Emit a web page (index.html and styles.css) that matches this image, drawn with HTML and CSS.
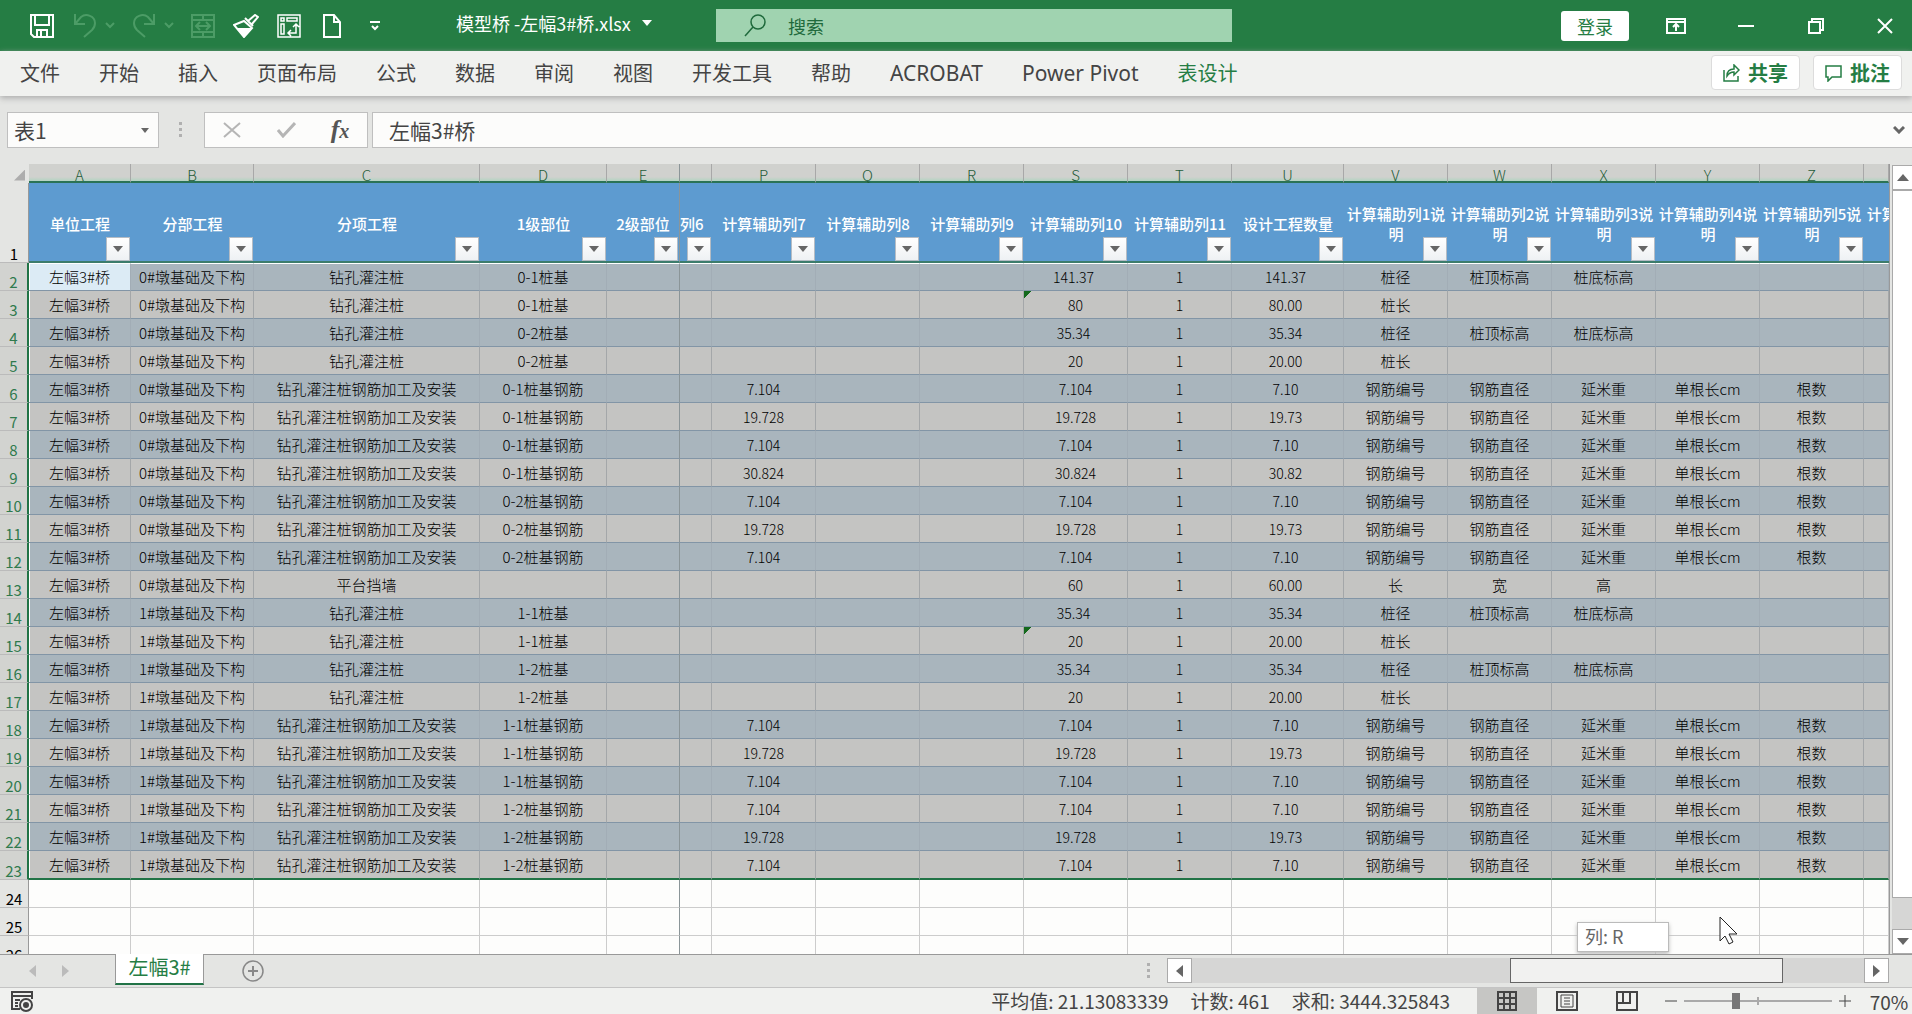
FILE: index.html
```html
<!DOCTYPE html>
<html lang="zh-CN">
<head>
<meta charset="utf-8">
<title>模型桥 -左幅3#桥.xlsx</title>
<link rel="stylesheet" href="styles.css">
</head>
<body>
<header class="titlebar">
  <div class="quick">
    <button class="q-btn" aria-label="保存"><svg width="24" height="24" viewBox="0 0 24 24"><path d="M1 1h22v22H4l-3-3zM5 1v10h14V1M7 23v-7h10v7M11 17v5"/></svg></button>
    <button class="q-btn dim" aria-label="撤消"><svg width="24" height="24" viewBox="0 0 24 24"><path d="M2 0v10h10M2 10L8 3c5-4 14-1 14 6 0 3-1 5-3 7l-8 7"/></svg></button>
    <button class="q-caret dim" aria-label="撤消列表"><svg width="10" height="7" viewBox="0 0 10 7"><path d="M1 1l4 4 4-4"/></svg></button>
    <button class="q-btn dim" aria-label="恢复"><svg width="24" height="24" viewBox="0 0 24 24"><path d="M22 0v10H12M22 10l-6-7C11-1 2 2 2 9c0 3 1 5 3 7l8 7"/></svg></button>
    <button class="q-caret dim" aria-label="恢复列表"><svg width="10" height="7" viewBox="0 0 10 7"><path d="M1 1l4 4 4-4"/></svg></button>
    <button class="q-btn dim" aria-label="合并后居中"><svg width="24" height="24" viewBox="0 0 24 24"><path d="M1 1h22v22H1zM1 6h22M1 18h22M12 1v5M12 18v5M5 12h14M9 8l-4 4 4 4M15 8l4 4-4 4"/></svg></button>
    <button class="q-btn" aria-label="格式刷"><svg width="26" height="24" viewBox="0 0 26 24"><path d="M1 11l10-4 8 7-8 9zM12 4l8 8M15 7l7-6 3 2-6 7"/><path class="solid" d="M6 15h11l-6 7z"/></svg></button>
    <button class="q-btn" aria-label="数据透视表"><svg class="fine" width="24" height="24" viewBox="0 0 24 24"><path d="M1 1h22v22H1zM4 4h3v3H4zM10 4h10v3H10zM4 10h3v10H4zM19 10v9h-8M16 13l3-3 3 3M14 16l-3 3 3 3"/></svg></button>
    <button class="q-btn" aria-label="新建"><svg width="20" height="24" viewBox="0 0 20 24"><path d="M2 1h10l6 7v15H2zM12 1v7h6"/></svg></button>
    <button class="q-more" aria-label="自定义快速访问工具栏"><svg width="12" height="10" viewBox="0 0 12 10"><path d="M1 1h10M3 5l3 3 3-3"/></svg></button>
  </div>
  <button class="doc-name">模型桥 -左幅3#桥.xlsx<span class="tri white"></span></button>
  <label class="search">
    <svg width="22" height="24" viewBox="0 0 22 24"><circle cx="14" cy="8" r="7"/><path d="M9 13L1 22"/></svg>
    <input type="search" placeholder="搜索" aria-label="搜索">
  </label>
  <div class="win">
    <button class="login">登录</button>
    <button class="w-btn" aria-label="功能区显示选项"><svg width="20" height="16" viewBox="0 0 20 16"><path d="M1 1h18v14H1zM1 4h18M10 13V7M7 9l3-3 3 3"/></svg></button>
    <button class="w-btn" aria-label="最小化"><svg width="16" height="16" viewBox="0 0 16 16"><path d="M0 8h16"/></svg></button>
    <button class="w-btn" aria-label="还原"><svg width="16" height="16" viewBox="0 0 16 16"><path d="M1 4h11v11H1zM4 4V1h11v11h-3"/></svg></button>
    <button class="w-btn" aria-label="关闭"><svg width="16" height="16" viewBox="0 0 16 16"><path d="M1 1l14 14M15 1L1 15"/></svg></button>
  </div>
</header>

<nav class="ribbon">
  <button>文件</button><button>开始</button><button>插入</button><button>页面布局</button><button>公式</button><button>数据</button><button>审阅</button><button>视图</button><button>开发工具</button><button>帮助</button><button class="latin">ACROBAT</button><button class="latin">Power Pivot</button><button class="on">表设计</button>
  <div class="ribbon-end">
    <button class="pill"><svg width="17" height="18" viewBox="0 0 17 18"><path d="M1 6v11h14v-5M4 12c0-5 3-7 7-7V1l5 5-5 5V8c-3 0-5 1-7 4z"/></svg>共享</button>
    <button class="pill"><svg width="17" height="18" viewBox="0 0 17 18"><path d="M1 2h15v11H7l-4 4v-4H1z"/></svg>批注</button>
  </div>
</nav>

<section class="formula">
  <div class="name-box"><input type="text" value="表1" aria-label="名称框"><button aria-label="名称列表"><span class="tri"></span></button></div>
  <span class="dots"></span>
  <div class="fx-box">
    <button aria-label="取消"><svg width="18" height="16" viewBox="0 0 18 16"><path d="M1 1l16 14M17 1L1 15"/></svg></button>
    <button aria-label="输入"><svg width="19" height="16" viewBox="0 0 19 16"><path class="thick" d="M1 8l5 6L18 1"/></svg></button>
    <button class="fx" aria-label="插入函数">f<small>x</small></button>
  </div>
  <div class="entry"><input type="text" value="左幅3#桥" aria-label="编辑栏"><button aria-label="展开编辑栏"><svg width="12" height="8" viewBox="0 0 12 8"><path d="M1 1l5 5 5-5"/></svg></button></div>
</section>

<main class="work">
  <div class="grid-view">
    <table class="grid" id="grid"></table>
    <div class="tip">列: R</div>
    <svg class="cursor" width="20" height="29" viewBox="0 0 20 29"><path d="M1 1v24l5-5 4 8 4-2-4-8h8z"/></svg>
  </div>
  <div class="vscroll">
    <button aria-label="向上"><span class="tri up"></span></button>
    <div class="v-thumb"></div>
    <div class="v-track"></div>
    <button aria-label="向下"><span class="tri down"></span></button>
  </div>
</main>

<div class="sheets">
  <button class="nav-arrow" aria-label="上一工作表"><span class="tri left pale"></span></button>
  <button class="nav-arrow" aria-label="下一工作表"><span class="tri right pale"></span></button>
  <button class="sheet-tab">左幅3#</button>
  <button class="add" aria-label="新工作表"><svg width="24" height="24" viewBox="0 0 24 24"><circle cx="12" cy="12" r="10"/><path class="thick" d="M7 12h10M12 7v10"/></svg></button>
  <div class="h-area">
    <span class="dots"></span>
    <div class="hscroll">
      <button aria-label="向左"><span class="tri left"></span></button>
      <div class="h-track"><div class="h-thumb"></div></div>
      <button aria-label="向右"><span class="tri right"></span></button>
    </div>
  </div>
</div>

<footer class="status">
  <button class="macro" aria-label="录制宏"><svg width="23" height="21" viewBox="0 0 23 21"><path d="M9 18H1V1h20v7M1 5h20M4 9h5M4 12h3M4 15h3"/><circle cx="15" cy="14" r="6"/><circle class="solid" cx="15" cy="14" r="2"/></svg></button>
  <div class="stats"><span>平均值: 21.13083339</span><span>计数: 461</span><span>求和: 3444.325843</span></div>
  <div class="views">
    <button class="on" aria-label="普通"><svg width="20" height="20" viewBox="0 0 20 20"><path d="M1 1h18v18H1zM1 7h18M1 13h18M7 1v18M13 1v18"/></svg></button>
    <button aria-label="页面布局"><svg width="22" height="20" viewBox="0 0 22 20"><path d="M1 1h20v18H1z"/><path class="hair" d="M5 4h12v12H5zM8 7h6M8 10h6M8 13h6"/></svg></button>
    <button aria-label="分页预览"><svg width="22" height="20" viewBox="0 0 22 20"><path d="M1 1h20v18H1zM7 1v11M1 12h13V1"/></svg></button>
  </div>
  <div class="zoom">
    <button aria-label="缩小"><svg width="12" height="12" viewBox="0 0 12 12"><path d="M0 6h12"/></svg></button>
    <input type="range" min="0" max="100" value="34" aria-label="显示比例">
    <button aria-label="放大"><svg width="12" height="12" viewBox="0 0 12 12"><path d="M0 6h12M6 0v12"/></svg></button>
    <button class="pct">70%</button>
  </div>
</footer>
<script src="grid.js"></script>
</body>
</html>
```
FILE: styles.css
```css
* { box-sizing: border-box; }
body {
  margin: 0;
  height: 100vh;
  display: flex;
  flex-direction: column;
  overflow: hidden;
  background: #e4e5e3;
  color: #444;
  font-family: "Noto Sans CJK SC", "Noto Sans", sans-serif;
  font-size: 20px;
}
button, input { font: inherit; color: inherit; border: 0; padding: 0; margin: 0; background: none; outline: 0; }
button { display: flex; align-items: center; justify-content: center; flex: none; white-space: nowrap; }
svg { display: block; fill: none; stroke: currentColor; stroke-width: 2; flex: none; }
svg .solid { fill: currentColor; }
svg .thick { stroke-width: 3; }
svg .hair { stroke-width: 1; }

.tri { width: 0; height: 0; border: 5px solid transparent; border-top: 6px solid #666; border-bottom: 0; }
.tri.white { border-top-color: #fff; }
.tri.up { border: 6px solid transparent; border-bottom: 7px solid #666; border-top: 0; }
.tri.down { border-width: 7px 6px 0; }
.tri.left { border: 6px solid transparent; border-right: 7px solid #666; border-left: 0; }
.tri.right { border: 6px solid transparent; border-left: 7px solid #666; border-right: 0; }
.tri.left.pale { border-right-color: #bbb; }
.tri.right.pale { border-left-color: #bbb; }
.dots {
  width: 3px;
  height: 16px;
  background: repeating-linear-gradient(#b0b0b0 0 3px, transparent 3px 6px);
}

/* Title bar */
.titlebar { flex: none; height: 51px; background: #257d44; color: #fff; display: flex; align-items: center; position: relative; }
.quick { display: flex; align-items: center; width: 456px; padding-left: 28px; flex: none; }
.quick .dim { color: #4c9c66; }
.q-btn { width: 28px; margin-right: 15px; }
.q-btn .fine { stroke-width: 1.5; }
.q-caret { width: 12px; margin-left: -10px; margin-right: 14px; }
.q-more { width: 28px; }
.doc-name { font-size: 18px; gap: 11px; padding-bottom: 5px; }
.search {
  position: absolute;
  left: 716px;
  top: 9px;
  width: 27%;
  height: 33px;
  background: #a0d3b0;
  color: #1f6a3c;
  display: flex;
  align-items: center;
  padding-left: 28px;
  gap: 22px;
}
.search svg { stroke-width: 1.5; }
.search input { flex: 1; min-width: 0; font-size: 18px; }
.search input::placeholder { color: #1f6a3c; opacity: 1; }
.win { margin-left: auto; display: flex; align-items: center; }
.login { width: 68px; height: 30px; background: #fff; color: #257d44; border-radius: 3px; font-size: 18px; margin-right: 12px; }
.w-btn { width: 70px; height: 50px; }
.w-btn:last-child { width: 61px; padding-left: 7px; }

/* Ribbon tabs */
.ribbon { flex: none; height: 45px; background: #f0f1ef; display: flex; align-items: center; gap: 39px; padding: 0 10px 2px 20px; box-shadow: 0 2px 6px #aaa; position: relative; font-family: "Noto Sans", "Noto Sans CJK SC", sans-serif; }
.ribbon > .on { color: #257d44; }
.ribbon > .latin { font-size: 21px; }
.ribbon-end { margin-left: auto; display: flex; gap: 13px; }
.pill { width: 89px; height: 35px; background: #fff; border: 1px solid #dcdcdc; border-radius: 4px; color: #257d44; font-weight: bold; gap: 8px; }
.pill svg { stroke-width: 1.5; }

/* Formula bar */
.formula { flex: none; height: 68px; padding: 16px 0 16px 7px; display: flex; align-items: center; font-size: 21px; }
.name-box, .fx-box, .entry { height: 36px; background: #fcfcfb; border: 1px solid #bfbfbf; display: flex; align-items: center; flex: none; }
.name-box { width: 152px; padding: 0 9px 0 6px; }
.name-box input, .entry input { flex: 1; min-width: 0; }
.name-box .tri { border-width: 5px 4px 0; }
.formula .dots { margin: 0 22px 0 20px; }
.fx-box { width: 164px; margin-right: 4px; justify-content: center; gap: 14px; color: #b5b5b5; }
.fx-box button { width: 40px; }
.fx-box .fx { color: #555; font: italic bold 26px "Liberation Serif", serif; align-items: baseline; }
.fx small { font-size: 20px; }
.entry { flex: 1; border-right: 0; padding: 0 7px 0 16px; }
.entry svg { stroke: #666; stroke-width: 3; }

/* Worksheet */
.work { flex: 1; min-height: 0; display: flex; }
.grid-view { flex: 1; min-width: 0; overflow: hidden; position: relative; border-right: 1px solid #999; }
.grid { table-layout: fixed; width: 100%; border-collapse: separate; border-spacing: 0; background: #fdfdfc; font-size: 15px; line-height: 20px; color: #000; }
.grid th, .grid td { padding: 0; border: 0 solid; text-align: center; vertical-align: middle; white-space: nowrap; font-weight: normal; }
.grid td { font-weight: 300; }
.c-head { width: 29px; }
.c-a { width: 102px; }
.c-b { width: 123px; }
.c-c { width: 226px; }
.c-d { width: 127px; }
.c-e { width: 73px; }
.c-o { width: 32px; }
.c-m { width: 104px; }
.c-u { width: 112px; }

.grid .letters th { height: 19px; padding-top: 5px; line-height: 12px; font-weight: 300; background: linear-gradient(#d0d1ce 13px, #b9d3c4 16px); border-right: 1px solid #a8a8a8; border-bottom: 2px solid #2b7355; color: #1f5b38; }
.grid .letters .corner { background: #e4e5e3; border-color: #e4e5e3; }
.corner span { display: block; width: 11px; height: 11px; margin-left: 14px; background: #adadad; clip-path: polygon(100% 0, 100% 100%, 0 100%); }

.grid .num { background: #e4e5e3; border-right: 1px solid #999; border-bottom: 1px solid #bbb; vertical-align: bottom; line-height: 16px; font-size: 15px; }
.titles th { height: 80px; }
.grid .titles .cap { position: relative; overflow: hidden; padding-top: 3px; background: #5d9bd0; color: #fff; border-bottom: 2px solid #3c7c6c; font-weight: 500; white-space: normal; }
.cap div { width: 104px; }
.grid .titles .partial { text-align: left; }
.filter { position: absolute; right: 1px; bottom: 0; width: 24px; height: 24px; background: linear-gradient(#fff, #eef1f4); border: 1px solid #b5bcc4; }

.row td, .row .num { height: 28px; }
.row.sel .num { background: #d2d3d0; border-right: 2px solid #217346; color: #2f7a4d; }
.row.sel td { background: #c4c4c2; border-right: 1px solid #a4a7a9; border-bottom: 1px solid #8295a6; }
.row.band td { background: #a9b5bd; border-right-color: #a2adb6; }
.row.sel td:nth-child(2) { box-shadow: inset 1px 0 #fff; }
.row.sel.first td { border-top: 1px solid #fff; }
.row.first td.active { background: #dcebf5; }
.row.last td { height: 29px; border-bottom: 2px solid #217346; }
.row.blank td { border-right: 1px solid #ccc; border-bottom: 1px solid #ccc; }
.grid .figure { font-size: 14px; }
.grid .decimal { padding-right: 4px; }
.row.sel td.flag { background-image: linear-gradient(135deg, #14691c 5px, transparent 5px); }
.letters th.freeze, .row td.freeze, .row.sel td.freeze, .grid .titles .freeze { border-right: 1px solid #8b9598; }

.tip { position: absolute; right: 220px; bottom: 2px; width: 92px; height: 30px; background: #fff; border: 1px solid #bbb; box-shadow: 0 2px 4px #bbb; font-size: 18px; line-height: 26px; padding-left: 7px; color: #666; }
.cursor { position: absolute; right: 150px; bottom: 9px; fill: #fff; stroke: #222; stroke-width: 1; }

.vscroll { flex: none; width: 22px; padding-top: 1px; border-left: 2px solid #e4e5e3; display: flex; flex-direction: column; }
.vscroll button { height: 25px; background: #fff; border: 1px solid #aaa; border-right: 0; }
.v-thumb { flex: 1; background: #fff; border: 1px solid #aaa; border-right: 0; }
.v-track { height: 31px; background: #d6d6d5; }

/* Sheet tabs */
.sheets { flex: none; height: 33px; border-top: 1px solid #999; display: flex; align-items: center; padding: 0 23px 1px 16px; }
.nav-arrow { width: 33px; }
.sheet-tab { width: 89px; height: 31px; margin: -1px 37px 0 33px; padding-bottom: 4px; line-height: 25px; background: #fff; border: 1px solid #999; border-top: 0; border-bottom: 2px solid #217346; color: #257d44; align-self: flex-start; }
.add { color: #888; }
.add svg { stroke-width: 1.5; }
.add .thick { stroke-width: 2; }
.h-area { margin-left: auto; width: 40%; display: flex; align-items: center; justify-content: flex-end; gap: 17px; }
.hscroll { width: 722px; display: flex; height: 25px; }
.hscroll button { width: 25px; background: #fff; border: 1px solid #aaa; }
.h-track { flex: 1; background: #d6d6d5; padding: 0 81px; display: flex; justify-content: flex-end; }
.h-thumb { width: 273px; background: #f1f1f0; border: 1px solid #666; }

/* Status bar */
.status { flex: none; height: 27px; background: #f0f1ef; border-top: 1px solid #c4c4c4; display: flex; align-items: center; padding: 0 4px 0 11px; overflow: hidden; font-size: 19px; }
.stats { margin-left: auto; display: flex; gap: 22px; white-space: nowrap; line-height: 26px; }
.views { display: flex; margin-left: 27px; color: #444; }
.views button { width: 60px; height: 26px; }
.views .on { background: #c6c6c4; }
.zoom { display: flex; align-items: center; margin-left: 8px; }
.zoom button { width: 12px; }
.zoom svg { stroke-width: 1; }
.zoom input {
  appearance: none;
  width: 148px;
  height: 16px;
  margin: 0 7px;
  background:
    linear-gradient(#aaa, #aaa) center / 2px 8px no-repeat,
    linear-gradient(#aaa, #aaa) center / 100% 2px no-repeat;
}
.zoom input::-webkit-slider-thumb { appearance: none; width: 8px; height: 16px; background: #777; }
.zoom .pct { width: 38px; margin-left: 19px; }
```
FILE: grid.js
```js
const columns = [
  ['A', 'c-a', '单位工程'], ['B', 'c-b', '分部工程'], ['C', 'c-c', '分项工程'],
  ['D', 'c-d', '1级部位'], ['E', 'c-e', '2级部位'], ['', 'c-o', '列6'],
  ['P', 'c-m', '计算辅助列7'], ['Q', 'c-m', '计算辅助列8'], ['R', 'c-m', '计算辅助列9'],
  ['S', 'c-m', '计算辅助列10'], ['T', 'c-m', '计算辅助列11'], ['U', 'c-u', '设计工程数量'],
  ['V', 'c-m', '计算辅助列1说明'], ['W', 'c-m', '计算辅助列2说明'], ['X', 'c-m', '计算辅助列3说明'],
  ['Y', 'c-m', '计算辅助列4说明'], ['Z', 'c-m', '计算辅助列5说明'], ['', '', '计算辅助列6说明']
];

const pile = '钻孔灌注桩';
const rebar = '钻孔灌注桩钢筋加工及安装';
const size = ['桩径', '桩顶标高', '桩底标高'];
const length = ['桩长'];
const steel = ['钢筋编号', '钢筋直径', '延米重', '单根长cm', '根数'];

// pier, item, part, P, S, U, notes
const rows = [
  [0, pile, '0-1桩基', '', '141.37', '141.37', size],
  [0, pile, '0-1桩基', '', '80', '80.00', length],
  [0, pile, '0-2桩基', '', '35.34', '35.34', size],
  [0, pile, '0-2桩基', '', '20', '20.00', length],
  [0, rebar, '0-1桩基钢筋', '7.104', '7.104', '7.10', steel],
  [0, rebar, '0-1桩基钢筋', '19.728', '19.728', '19.73', steel],
  [0, rebar, '0-1桩基钢筋', '7.104', '7.104', '7.10', steel],
  [0, rebar, '0-1桩基钢筋', '30.824', '30.824', '30.82', steel],
  [0, rebar, '0-2桩基钢筋', '7.104', '7.104', '7.10', steel],
  [0, rebar, '0-2桩基钢筋', '19.728', '19.728', '19.73', steel],
  [0, rebar, '0-2桩基钢筋', '7.104', '7.104', '7.10', steel],
  [0, '平台挡墙', '', '', '60', '60.00', ['长', '宽', '高']],
  [1, pile, '1-1桩基', '', '35.34', '35.34', size],
  [1, pile, '1-1桩基', '', '20', '20.00', length],
  [1, pile, '1-2桩基', '', '35.34', '35.34', size],
  [1, pile, '1-2桩基', '', '20', '20.00', length],
  [1, rebar, '1-1桩基钢筋', '7.104', '7.104', '7.10', steel],
  [1, rebar, '1-1桩基钢筋', '19.728', '19.728', '19.73', steel],
  [1, rebar, '1-1桩基钢筋', '7.104', '7.104', '7.10', steel],
  [1, rebar, '1-2桩基钢筋', '7.104', '7.104', '7.10', steel],
  [1, rebar, '1-2桩基钢筋', '19.728', '19.728', '19.73', steel],
  [1, rebar, '1-2桩基钢筋', '7.104', '7.104', '7.10', steel]
];
const flagged = [3, 15];

let html = '<colgroup><col class="c-head">' + columns.map(c => `<col class="${c[1]}">`).join('') + '</colgroup>';
html += '<thead><tr class="letters"><th class="corner"><span></span></th>' +
  columns.map((c, i) => `<th class="${i === 4 ? 'freeze' : ''}">${c[0]}</th>`).join('') + '</tr>';
html += '<tr class="titles"><th class="num">1</th>' + columns.map((c, i) => {
  const cls = 'cap' + (i === 4 ? ' freeze' : '') + (i === 5 ? ' partial' : '');
  const text = i === 17 ? `<div>${c[2]}</div>` : c[2];
  const filter = i === 17 ? '' : `<button class="filter" aria-label="筛选 ${c[2]}"><span class="tri"></span></button>`;
  return `<th class="${cls}">${text}${filter}</th>`;
}).join('') + '</tr></thead><tbody>';

rows.forEach((r, n) => {
  const number = n + 2;
  const cells = ['左幅3#桥', r[0] + '#墩基础及下构', r[1], r[2], '', '', r[3], '', '', r[4], '1', r[5]];
  for (let i = 0; i < 6; i++) cells.push(r[6][i] || '');
  const cls = 'row sel' + (n % 2 ? '' : ' band') + (n === 0 ? ' first' : '') + (n === rows.length - 1 ? ' last' : '');
  html += `<tr class="${cls}"><th class="num">${number}</th>` + cells.map((t, i) => {
    const c = [];
    if (i === 0 && n === 0) c.push('active');
    if (i === 4) c.push('freeze');
    if (i > 5 && i < 12) c.push('figure');
    if (i === 11 || (i === 9 && r[6] === size)) c.push('decimal');
    if (i === 9 && flagged.includes(number)) c.push('flag');
    return `<td class="${c.join(' ')}">${t}</td>`;
  }).join('') + '</tr>';
});
for (let number = 24; number <= 26; number++) {
  html += `<tr class="row blank"><th class="num">${number}</th>` +
    columns.map((c, i) => `<td class="${i === 4 ? 'freeze' : ''}"></td>`).join('') + '</tr>';
}
document.getElementById('grid').innerHTML = html + '</tbody>';
```
